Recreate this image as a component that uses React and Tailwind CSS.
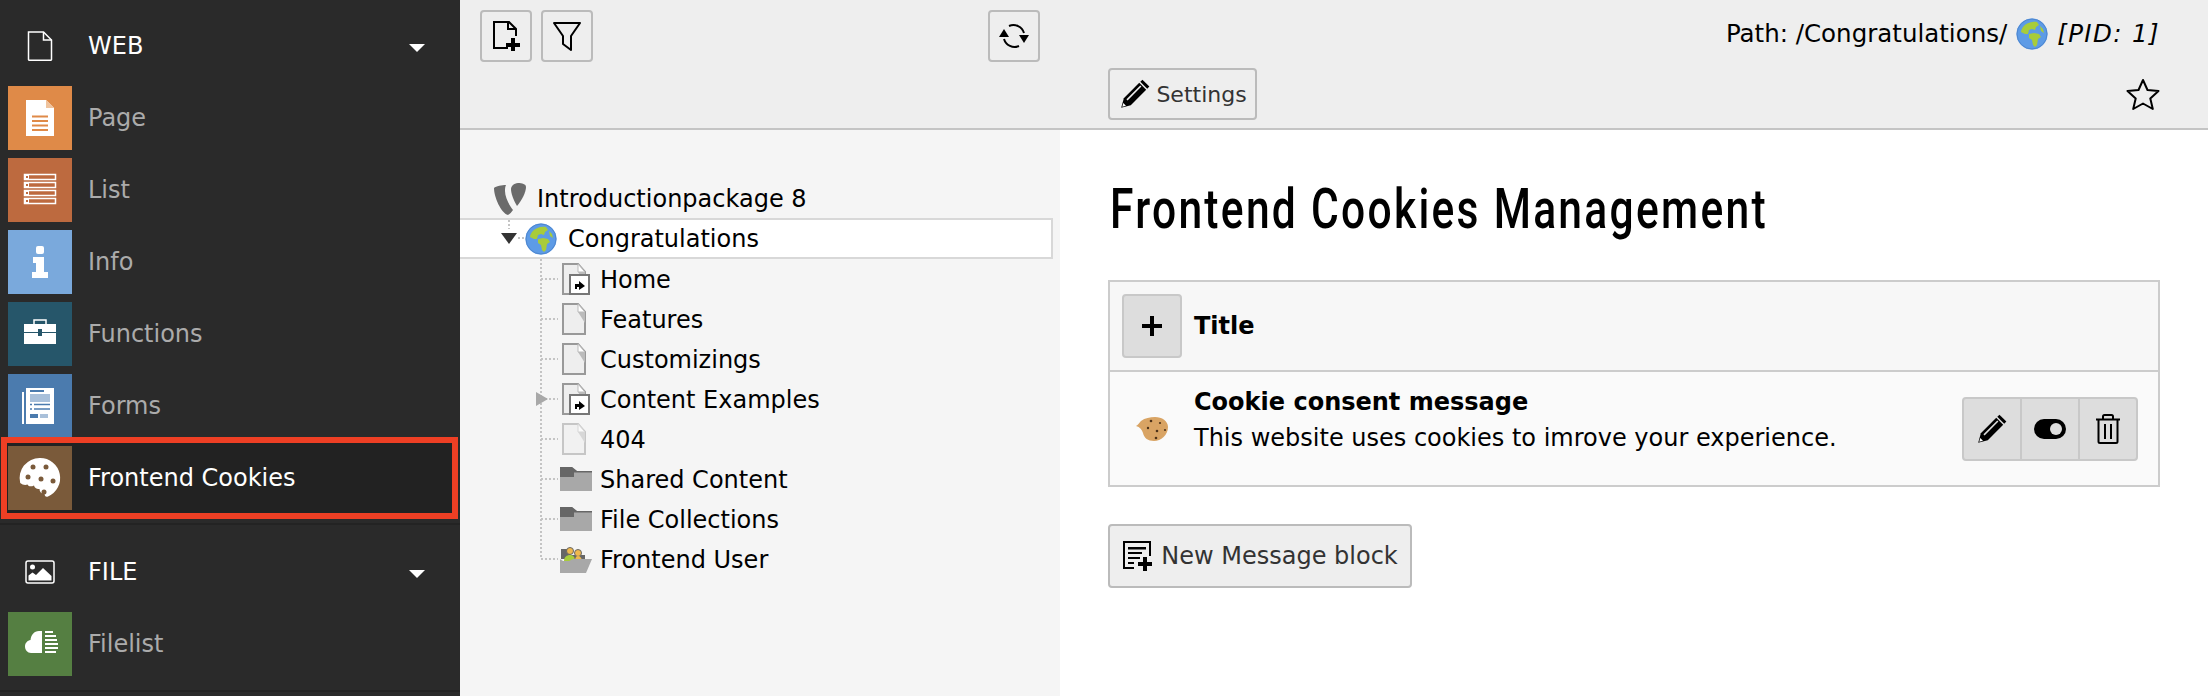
import React from 'react';

const Verdana = '[font-family:"DejaVu_Sans",Verdana,sans-serif]';

function Tile({ color, children }) {
    return (
        <div className="w-16 h-16 shrink-0 flex items-center justify-center" style={{ backgroundColor: color }}>
            <svg width="64" height="64" viewBox="0 0 64 64">{children}</svg>
        </div>
    );
}

const PageGlyph = () => (
    <>
        <path d="M18 14h20l8 8v28H18z" fill="#fff" />
        <path d="M38 14l8 8h-8z" fill="#efc39d" />
        <path d="M24 30.500h16M24 35h16M24 39.500h16M24 44h16" stroke="#df8a48" strokeWidth="2" />
    </>
);

const ListGlyph = () => (
    <>
        {[16, 24, 32, 40].map((y) => (
            <g key={y}>
                <rect x="16.500" y={y + 0.5} width="31" height="5" fill="none" stroke="#fff" strokeWidth="1.500" />
                <rect x="16" y={y} width="5" height="6" fill="#fff" />
                <rect x="18" y={y + 2} width="2" height="2" fill="#bd6a3f" />
            </g>
        ))}
    </>
);

const InfoGlyph = () => (
    <>
        <rect x="28" y="16" width="8" height="8" rx="2" fill="#fff" />
        <path d="M25 27h11v15h4v6H24v-6h4v-9h-3z" fill="#fff" />
    </>
);

const BriefcaseGlyph = () => (
    <>
        <path d="M26 22v-4h12v4" fill="none" stroke="#fff" strokeWidth="1.500" />
        <rect x="16" y="22" width="32" height="8" fill="#fff" />
        <rect x="16" y="31" width="32" height="11" fill="#fff" />
        <rect x="30" y="27" width="4" height="7" fill="#26566a" />
    </>
);

const FormsGlyph = () => (
    <>
        <rect x="14" y="18" width="2" height="32" fill="#fff" />
        <rect x="18" y="14" width="28" height="36" fill="#fff" />
        <rect x="22" y="16" width="14" height="2" fill="#4b7bae" />
        <rect x="22" y="20" width="20" height="8" fill="#a9c0da" />
        <path d="M22 30.500h2M26 30.500h16M22 35h2M26 35h16" stroke="#4b7bae" strokeWidth="1.500" />
        <rect x="22" y="40" width="8" height="4" fill="#4b7bae" />
        <rect x="32" y="40" width="8" height="4" fill="#a9c0da" />
    </>
);

const CookieGlyph = () => (
    <>
        <path d="M32 12a20 20 0 0 1 8 38.400c-2 1-3.500-.5-3.500-3-3 .5-5-1.500-5-4.500-2.500.5-5-1-5.500-3.500-3 1.500-5.500 1-6.500-1-2 1-5 .5-7.300-1.500A20 20 0 0 1 32 12z" fill="#fff" />
        <g fill="#7a5a3a">
            <circle cx="25" cy="21" r="2.500" />
            <circle cx="38" cy="21" r="2.500" />
            <circle cx="20" cy="31" r="2.500" />
            <circle cx="33" cy="33" r="2.500" />
            <circle cx="45" cy="35" r="2.500" />
            <circle cx="36" cy="46" r="2.500" />
        </g>
    </>
);

const CloudGlyph = () => (
    <>
        <path d="M34 19h-3c-5 0-8 4-8.500 9-3 .5-5.500 3-5.500 6.500S19.500 41 23 41h11z" fill="#fff" />
        <path d="M37 20h8M37 24h11M37 28h12M37 32h13M37 36h13M37 40h11" stroke="#fff" strokeWidth="2" />
    </>
);

function GroupHeader({ label, icon }) {
    return (
        <div className="flex items-center h-16 pl-[8px] pr-[35px] mb-2 text-white">
            <div className="w-16 h-16 flex items-center justify-center">{icon}</div>
            <span className="ml-[16px] flex-1 text-[24px]">{label}</span>
            <span className="w-0 h-0 mt-[4px] border-x-[8px] border-t-[8px] border-x-transparent border-t-white" />
        </div>
    );
}

function ModuleItem({ label, color, children }) {
    return (
        <div className="flex items-center h-16 pl-2 mb-2">
            <Tile color={color}>{children}</Tile>
            <span className="ml-[16px] text-[24px] text-[#ababab]">{label}</span>
        </div>
    );
}

function Sidebar() {
    return (
        <aside className="w-[460px] shrink-0 h-full bg-[#2a2a2a]">
            <div className="pt-[14px]">
                <GroupHeader
                    label="WEB"
                    icon={
                        <svg width="26" height="30" viewBox="0 0 26 30" fill="none" stroke="#fff" strokeWidth="1.500">
                            <path d="M1.500 1h15l8 8v19.500a.8.8 0 0 1-.8.8H2.300a.8.8 0 0 1-.8-.8z" />
                            <path d="M16.500 1v8h8" />
                        </svg>
                    }
                />
                <ModuleItem label="Page" color="#df8a48"><PageGlyph /></ModuleItem>
                <ModuleItem label="List" color="#bd6a3f"><ListGlyph /></ModuleItem>
                <ModuleItem label="Info" color="#7aa9dc"><InfoGlyph /></ModuleItem>
                <ModuleItem label="Functions" color="#26566a"><BriefcaseGlyph /></ModuleItem>
                <ModuleItem label="Forms" color="#4b7bae"><FormsGlyph /></ModuleItem>
                <div className="relative flex items-center h-16 pl-2">
                    <div className="absolute left-[1px] top-[-9px] w-[457px] h-[82px] border-[6px] border-[#ee3f24] bg-[#222]" />
                    <div className="relative flex items-center">
                        <Tile color="#7a5a3a"><CookieGlyph /></Tile>
                        <span className="ml-[16px] text-[24px] text-white">Frontend Cookies</span>
                    </div>
                </div>
            </div>
            <div className="mt-[13px] border-t-2 border-[#232323] pt-[15px] pb-[6px] border-b-2">
                <GroupHeader
                    label="FILE"
                    icon={
                        <svg width="30" height="24" viewBox="0 0 30 24">
                            <rect x="1" y="1" width="28" height="22" rx="2" fill="none" stroke="#fff" strokeWidth="1.500" />
                            <circle cx="7.500" cy="7" r="2.500" fill="#fff" />
                            <path d="M3.500 20.500v-5l4-3 3.500 2.500 7-7 8.500 8v4.500z" fill="#fff" />
                        </svg>
                    }
                />
                <ModuleItem label="Filelist" color="#557f42"><CloudGlyph /></ModuleItem>
            </div>
        </aside>
    );
}

function ToolButton({ className = '', children }) {
    return (
        <button className={`flex items-center justify-center h-[52px] border-2 border-[#bbb] rounded-[4px] bg-[#eee] text-[#333] ${className}`}>
            {children}
        </button>
    );
}

const PencilIcon = ({ size = 34, hi = '#ddd' }) => (
    <svg width={size} height={size} viewBox="0 0 32 32" className="shrink-0">
        <path d="M5.500 20L20 5.500l6.500 6.500L12 26.500 3 29z" fill="#000" />
        <path d="M8.500 21.500L21.500 8.500" stroke={hi} strokeWidth="1.500" />
        <path d="M5 24.500L7.500 27l-3.500 1z" fill="#fff" />
        <path d="M23 2.500L29.500 9l-2 2L21 4.500z" fill="#000" />
    </svg>
);

const GlobeIcon = ({ size = 32 }) => (
    <svg width={size} height={size} viewBox="0 0 32 32" className="shrink-0">
        <circle cx="16" cy="16" r="15.500" fill="#5d9be6" />
        <circle cx="16" cy="16" r="15" fill="none" stroke="#4d86cf" strokeWidth="1" />
        <path d="M7 9c3-4 9-6 14-5l2 3-3 2-1 3-3-1-3 1-1 4H9L5 14c0-2 1-3 2-5z" fill="#a8cc3a" />
        <path d="M13 16l5-1 5 1 2 3-3 2-1 6-2 2-2-2-1-5-3-2z" fill="#a8cc3a" />
        <path d="M24 8l3 3 1 4-3-2z" fill="#a8cc3a" />
    </svg>
);

const PageIcon = ({ shortcut, faded }) => (
    <svg width="28" height="32" viewBox="0 0 28 32" className={faded ? 'opacity-50' : ''}>
        <path d="M1 1h15l7 8v22H1z" fill="#eee" stroke="#999" strokeWidth="2" />
        <path d="M16 1l7 8h-7z" fill="#fff" stroke="#bbb" strokeWidth="1" />
        <path d="M16 9l7 0v11z" fill="#bbb" />
        {shortcut && (
            <>
                <rect x="8" y="12" width="19" height="19" fill="#fff" stroke="#777" strokeWidth="2" />
                <path d="M13 26v-5h4v-3l6 5-6 4v-3h-2v2z" fill="#000" />
            </>
        )}
    </svg>
);

const FolderIcon = () => (
    <svg width="32" height="24" viewBox="0 0 32 24">
        <path d="M0 0h12l5 4h15v20H0z" fill="#a8a8a8" />
        <path d="M0 0h12l5 4h15v1.500H14V10H0z" fill="#666" />
    </svg>
);

const UsersFolderIcon = () => (
    <svg width="32" height="28" viewBox="0 0 32 28">
        <path d="M1 4h9v6h15v4H1z" fill="#666" />
        <circle cx="10" cy="6" r="3.500" fill="#efb84d" stroke="#666" />
        <circle cx="18" cy="8" r="3.500" fill="#efb84d" stroke="#666" />
        <path d="M4 16c0-4 3-6 6-6s5 2 5 6z" fill="#a8cc3a" />
        <path d="M15 16c0-3 1-5 3-5s4 2 4 5z" fill="#efb84d" />
        <path d="M0 28V14l3 2h6l4-2h19l-6 14z" fill="#a8a8a8" />
    </svg>
);

function TreeLine({ last, arrow }) {
    return (
        <svg width="20" height="40" viewBox="0 0 20 40" className="shrink-0 overflow-visible">
            <path d={last ? 'M1 0v20' : 'M1 0v40'} stroke="#c4c4c4" strokeWidth="2" strokeDasharray="2 2" />
            <path d="M1 20h17" stroke="#c4c4c4" strokeWidth="2" strokeDasharray="2 2" />
            {arrow && <path d="M-4 13l12 7-12 7z" fill="#a8a8a8" />}
        </svg>
    );
}

const treeItems = [
    { label: 'Home', icon: <PageIcon shortcut /> },
    { label: 'Features', icon: <PageIcon /> },
    { label: 'Customizings', icon: <PageIcon /> },
    { label: 'Content Examples', icon: <PageIcon shortcut />, arrow: true },
    { label: '404', icon: <PageIcon faded /> },
    { label: 'Shared Content', icon: <FolderIcon /> },
    { label: 'File Collections', icon: <FolderIcon /> },
    { label: 'Frontend User', icon: <UsersFolderIcon />, last: true },
];

function PageTree() {
    return (
        <div className="w-[600px] shrink-0 bg-[#f5f5f5] pt-[49px] text-[24px] text-black">
            <div className="flex items-center h-[39px] pl-[33px]">
                <svg width="34" height="32" viewBox="0 0 34 32" className="shrink-0">
                    <path d="M1 5c2-2 8-3 12-3-1 2-1 4-1 6 0 6 4 14 8 19-1.500 2-3 4-5 5C8 30 1 14 1 5z" fill="#6b6b6b" />
                    <path d="M20 2c1-1 3-2 5-2 4 0 8 1 8 4 0 5-4 13-9 19-3-5-6-12-6-17 0-2 1-3 2-4z" fill="#6b6b6b" />
                </svg>
                <span className="ml-[10px]">Introductionpackage 8</span>
            </div>
            <div className="flex items-center h-[41px] w-[593px] pl-[40px] bg-white border-y-2 border-r-2 border-[#d8d8d8]">
                <svg width="26" height="37" viewBox="0 0 26 37" className="shrink-0 -mr-[1px]">
                    <path d="M9 0v9" stroke="#c4c4c4" strokeWidth="2" strokeDasharray="2 2" />
                    <path d="M18 18h8" stroke="#c4c4c4" strokeWidth="2" strokeDasharray="2 2" />
                    <path d="M1 13h16l-8 11z" fill="#333" />
                </svg>
                <GlobeIcon />
                <span className="ml-[11px]">Congratulations</span>
            </div>
            <div className="pl-[80px]">
                {treeItems.map((item) => (
                    <div key={item.label} className="flex items-center h-10">
                        <TreeLine last={item.last} arrow={item.arrow} />
                        <div className="w-[32px] flex justify-center">{item.icon}</div>
                        <span className="ml-[8px] pt-[1px]">{item.label}</span>
                    </div>
                ))}
            </div>
        </div>
    );
}

function Content() {
    return (
        <main className="flex-1 bg-white pl-[48px] pr-[48px]">
            <h1 className='mt-[47px] ml-[2px] h-[64px] flex items-center whitespace-nowrap text-[56px] font-medium tracking-[3px] text-black origin-left scale-x-[0.76] [font-family:Roboto,"Liberation_Sans",sans-serif]'>
                Frontend Cookies Management
            </h1>
            <div className="mt-[39px] border-2 border-[#ccc] text-[24px] text-black">
                <div className="flex items-center h-[90px] pl-3 bg-[#f7f7f7] border-b-2 border-[#ccc]">
                    <button className="w-[60px] h-[64px] flex items-center justify-center bg-[#ddd] border-2 border-[#c8c8c8] rounded-[4px]">
                        <svg width="20" height="20" viewBox="0 0 20 20"><path d="M10 0v20M0 10h20" stroke="#000" strokeWidth="4" /></svg>
                    </button>
                    <span className="ml-[12px] font-bold">Title</span>
                </div>
                <div className="flex items-center h-[113px] bg-[#fafafa] pl-[26px] pr-[20px]">
                    <svg width="32" height="26" viewBox="0 0 32 26" className="shrink-0 mt-[3px]">
                        <path d="M0 9c2-1 4-4 5-5 4-3 9-4 14-4 7 0 13 4 13 10 0 8-7 14-14 14-6 0-10-3-11-8-1-3-3-6-7-7z" fill="#d9a464" />
                        <g fill="#4d3219">
                            <circle cx="15" cy="4" r="1.300" />
                            <circle cx="24" cy="6" r="1.100" />
                            <circle cx="12" cy="11" r="1.200" />
                            <circle cx="21" cy="14" r="1.300" />
                            <circle cx="29" cy="13" r="1.100" />
                            <circle cx="20" cy="21" r="1.300" />
                        </g>
                    </svg>
                    <div className="ml-[26px] flex-1 mb-[17px]">
                        <div className="font-bold leading-[36px]">Cookie consent message</div>
                        <div className="leading-[36px]">This website uses cookies to imrove your experience.</div>
                    </div>
                    <div className="flex h-[64px] w-[176px] bg-[#ddd] border-2 border-[#c8c8c8] rounded-[4px] divide-x-2 divide-[#c8c8c8]">
                        <div className="flex-1 flex items-center justify-center"><PencilIcon /></div>
                        <div className="flex-1 flex items-center justify-center">
                            <svg width="32" height="20" viewBox="0 0 32 20">
                                <rect width="32" height="20" rx="10" fill="#000" />
                                <circle cx="22" cy="10" r="6" fill="#ddd" />
                            </svg>
                        </div>
                        <div className="flex-1 flex items-center justify-center">
                            <svg width="26" height="30" viewBox="0 0 26 30" fill="none" stroke="#000" strokeWidth="2">
                                <path d="M1 5.500h24M8 5V2.500c0-.8.6-1.500 1.500-1.500h7c.9 0 1.500.7 1.500 1.500V5" />
                                <path d="M3.500 6v21.500c0 .8.7 1.500 1.500 1.500h16c.8 0 1.500-.7 1.500-1.500V6" />
                                <path d="M10 10v15M16 10v15" />
                            </svg>
                        </div>
                    </div>
                </div>
            </div>
            <ToolButton className="mt-[37px] h-[64px] w-[304px] text-[24px] gap-[7px] whitespace-nowrap">
                <svg width="32" height="32" viewBox="0 0 32 32">
                    <path d="M12 28H2V2h26v14" fill="none" stroke="#000" strokeWidth="2" />
                    <path d="M6 7h18v2.500H6zM6 12h14v2H6zM6 17h12v2H6zM6 22h6v2H6z" fill="#000" />
                    <path d="M23 17v14M16 24h14" stroke="#000" strokeWidth="4" />
                </svg>
                New Message block
            </ToolButton>
        </main>
    );
}

export default function App() {
    return (
        <div className={`flex w-[2208px] h-[696px] overflow-hidden ${Verdana}`}>
            <Sidebar />
            <div className="flex-1 flex flex-col min-w-0">
                <header className="flex h-[130px] shrink-0 bg-[#eee] border-b-2 border-[#c4c4c4]">
                    <div className="w-[600px] shrink-0 flex justify-between items-start pt-[10px] px-5">
                        <div className="flex gap-[9px]">
                            <ToolButton className="w-[52px]">
                                <svg width="32" height="32" viewBox="0 0 32 32" fill="none">
                                    <path d="M18 28H4V2h15l7 7v7" stroke="#000" strokeWidth="2" />
                                    <path d="M18 2v7h8" stroke="#000" strokeWidth="2" />
                                    <path d="M23 18v13M16 25h14" stroke="#000" strokeWidth="4" />
                                </svg>
                            </ToolButton>
                            <ToolButton className="w-[52px]">
                                <svg width="30" height="32" viewBox="0 0 30 32" fill="none">
                                    <path d="M2 3h26L19 16v14l-8-6v-8z" stroke="#000" strokeWidth="2" strokeLinejoin="round" />
                                </svg>
                            </ToolButton>
                        </div>
                        <ToolButton className="w-[52px]">
                            <svg width="32" height="28" viewBox="0 0 32 28" fill="none">
                                <path d="M11 4A11 11 0 0 1 26 11M21 24A11 11 0 0 1 6 17" stroke="#000" strokeWidth="2" />
                                <path d="M6 7l5 8H1zM26 21l-5-8h10z" fill="#000" />
                            </svg>
                        </ToolButton>
                    </div>
                    <div className="flex-1 flex flex-col px-[48px]">
                        <div className="h-[68px] flex items-center justify-end text-[24.500px] text-black whitespace-nowrap">
                            <span>Path: /Congratulations/</span>
                            <span className="mx-[9px]"><GlobeIcon /></span>
                            <em className="tracking-[1.400px]">[PID: 1]</em>
                        </div>
                        <div className="flex items-center justify-between h-[52px]">
                            <ToolButton className="w-[149px] text-[22px] gap-[4px]">
                                <PencilIcon hi="#eee" />
                                Settings
                            </ToolButton>
                            <svg width="34" height="32" viewBox="0 0 34 32" fill="none">
                                <path d="M17 2l4.500 10 11 1-8.200 7.500 2.500 10.500-9.800-5.500L7.200 31l2.500-10.500L1.500 13l11-1z" stroke="#000" strokeWidth="2" strokeLinejoin="round" />
                            </svg>
                        </div>
                    </div>
                </header>
                <div className="flex-1 flex min-h-0">
                    <PageTree />
                    <Content />
                </div>
            </div>
        </div>
    );
}
